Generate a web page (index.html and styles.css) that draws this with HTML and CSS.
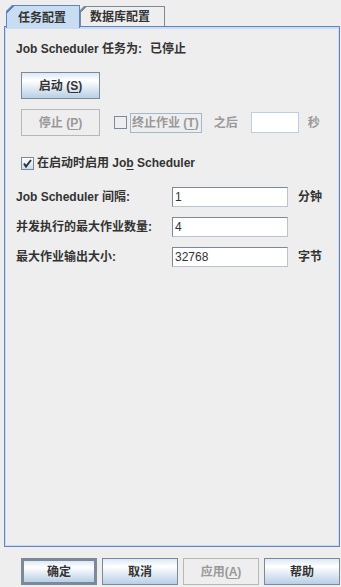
FILE: index.html
```html
<!DOCTYPE html>
<html lang="zh">
<head>
    <meta charset="UTF-8">
    <title>Job Scheduler 配置</title>
    <link rel="stylesheet" href="styles.css">
</head>
<body>
    <!-- Tabs -->
    <div class="tabs">
        <div class="tab tab-selected">任务配置</div>
        <div class="tab tab-plain">数据库配置</div>
    </div>

    <!-- Job settings panel -->
    <div class="panel">
        <div class="status">
            <span>Job Scheduler 任务为:</span>
            <span>已停止</span>
        </div>

        <button class="btn btn-start">启动 (<u>S</u>)</button>

        <div class="stop-row">
            <button class="btn btn-stop" disabled>停止 (<u>P</u>)</button>
            <span class="check check-off"></span>
            <span class="check-label">终止作业 (<u>T</u>)</span>
            <span class="dim after">之后</span>
            <input class="field field-wait" type="text" disabled>
            <span class="dim sec">秒</span>
        </div>

        <div class="enable-row">
            <span class="check check-on">
                <svg width="11" height="11" viewBox="0 0 11 11"><path d="M2 5.5 L4 8.5 L9 2" fill="none" stroke="#333" stroke-width="2"/></svg>
            </span>
            <span class="enable-text">在启动时启用 Jo<u>b</u> Scheduler</span>
        </div>

        <div class="form">
            <span class="label">Job Scheduler 间隔:</span>
            <input class="field" type="text" value="1">
            <span class="unit">分钟</span>

            <span class="label">并发执行的最大作业数量:</span>
            <input class="field" type="text" value="4">
            <span class="unit"></span>

            <span class="label">最大作业输出大小:</span>
            <input class="field" type="text" value="32768">
            <span class="unit">字节</span>
        </div>
    </div>

    <!-- Dialog buttons -->
    <div class="actions">
        <button class="btn btn-action btn-default">确定</button>
        <button class="btn btn-action">取消</button>
        <button class="btn btn-action" disabled>应用(<u>A</u>)</button>
        <button class="btn btn-action">帮助</button>
    </div>
</body>
</html>
```

FILE: styles.css
```css
* {
    box-sizing: border-box;
}
body {
    margin: 0;
    height: 100vh;
    overflow: hidden;
    display: flex;
    flex-direction: column;
    background-color: #eeeeee;
    color: #333333;
    font-family: "Liberation Sans", "Noto Sans CJK SC", sans-serif;
    font-size: 12px;
    line-height: 16px;
    font-weight: bold;
}
u {
    text-decoration-thickness: 1px;
    text-underline-offset: 2px;
}

/* tabs */
.tabs {
    display: flex;
    align-items: flex-end;
    height: 26px;
    padding-left: 6px;
}
.tab {
    border: 1px solid #7a8a99;
    border-bottom: none;
    background-origin: border-box;
    white-space: nowrap;
}
.tab-selected {
    position: relative;
    z-index: 1;
    width: 74px;
    height: 23px;
    margin-bottom: -2px;
    padding: 4px 0 0 11px;
    border-color: #6382bf;
    background: linear-gradient(135deg, #6382bf 5.4px, #c8ddf2 5.4px);
    clip-path: polygon(6px 0, 100% 0, 100% 100%, 0 100%, 0 6px);
}
.tab-plain {
    width: 85px;
    height: 20px;
    padding: 2px 0 0 9px;
    background: linear-gradient(135deg, #7a8a99 4.2px, #eeeeee 4.2px);
    clip-path: polygon(4px 0, 100% 0, 100% 100%, 0 100%, 0 4px);
}

/* panel */
.panel {
    flex: 1;
    width: 336px;
    margin-left: 4px;
    padding: 14px 0 0 11px;
    border: 1px solid #6382bf;
    box-shadow: inset 0 2px 0 #c8ddf2, inset 0 0 0 1px #c8ddf2;
    display: flex;
    flex-direction: column;
    align-items: flex-start;
}
.status {
    display: flex;
    gap: 8px;
}

/* buttons */
.btn {
    height: 27px;
    padding: 0;
    border: 1px solid #7a8a99;
    background: linear-gradient(#dde8f3, #ffffff 30%, #b8cfe5);
    color: #333333;
    font: inherit;
    white-space: nowrap;
}
.btn:disabled {
    border-color: #b8b8b8;
    background: #eeeeee;
    color: #999999;
}
.btn-start {
    width: 79px;
    margin: 15px 0 0 5px;
}
.btn-stop {
    width: 79px;
}
.btn-default {
    border: 3px solid #7a8a99;
}

/* stop row */
.stop-row {
    display: flex;
    align-items: center;
    margin: 10px 0 0 5px;
}
.check {
    display: inline-flex;
    align-items: center;
    justify-content: center;
    width: 13px;
    height: 13px;
    border: 1px solid #7a8a99;
}
.check-off {
    margin-left: 14px;
}
.check-on {
    background: linear-gradient(#ffffff, #c8ddf2);
}
.check-label {
    margin-left: 3px;
    height: 20px;
    padding: 1px 2px 0 1px;
    border: 1px solid #a3b8cc;
    color: #999999;
}
.dim {
    color: #999999;
}
.after {
    margin-left: 12px;
}
.sec {
    margin-left: 9px;
}

/* text fields */
.field {
    height: 20px;
    width: 116px;
    padding: 0 2px;
    border: 1px solid #7a8a99;
    border-right-color: #b8c4cf;
    border-bottom-color: #b8c4cf;
    background: #ffffff;
    color: #333333;
    font: 12px "Liberation Sans", "Noto Sans CJK SC", sans-serif;
    outline: none;
}
.field-wait {
    width: 48px;
    height: 21px;
    margin-left: 13px;
    border-color: #b8cfe5;
}

/* checkbox row */
.enable-row {
    display: flex;
    align-items: center;
    margin: 19px 0 0 5px;
}
.enable-text {
    margin-left: 3px;
}

/* form grid */
.form {
    display: grid;
    grid-template-columns: 156px 116px auto;
    grid-auto-rows: 20px;
    row-gap: 10px;
    align-items: center;
    margin-top: 16px;
}
.unit {
    margin-left: 10px;
}

/* dialog buttons */
.actions {
    display: flex;
    gap: 5px;
    padding-left: 21px;
    margin: 11px 0 2px;
}
.btn-action {
    width: 76px;
}
```
